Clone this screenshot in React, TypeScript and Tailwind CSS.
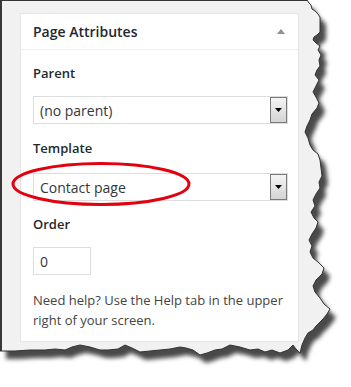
const TORN: [number, number][] = [
  [307, 0], [309, 3], [311, 5], [312, 9], [315, 11], [318, 14], [320, 17], [320, 32], [317, 35], [314, 37],
  [313, 40], [316, 43], [320, 46], [318, 50], [321, 55], [319, 60], [320, 66], [317, 70], [315, 75], [319, 80],
  [316, 86], [313, 92], [316, 97], [319, 103], [317, 108], [312, 114], [310, 120], [307, 126], [305, 132],
  [308, 138], [310, 145], [313, 150], [318, 154], [320, 160], [321, 168], [322, 176], [319, 182], [320, 188],
  [316, 194], [313, 200], [315, 206], [311, 212], [314, 218], [318, 222], [316, 228], [312, 234], [309, 240],
  [312, 246], [310, 252], [313, 258], [318, 262], [324, 268], [322, 274], [316, 280], [313, 286], [315, 292],
  [320, 298], [324, 304], [330, 309], [327, 314], [323, 319], [320, 322], [316, 326], [313, 330], [308, 333],
  [305, 338], [302, 345], [300, 353], [296, 349], [293, 345], [288, 350], [280, 353], [272, 350], [265, 352],
  [258, 349], [250, 350], [240, 347], [230, 345], [222, 349], [215, 350], [207, 353], [200, 355], [193, 350],
  [186, 348], [180, 347], [170, 349], [160, 350], [150, 351], [140, 352], [132, 348], [125, 345], [118, 349],
  [108, 350], [100, 350], [90, 347], [80, 345], [72, 347], [65, 350], [55, 349], [45, 350], [30, 350],
  [15, 351], [0, 351],
];

const tornD = 'M' + TORN.map(([x, y]) => `${x} ${y}`).join(' L') + ' L0 0 Z';

function SelectBox({ value }: { value: string }) {
  return (
    <div className="flex h-[28px] w-[255px] items-stretch border border-[#dddddd] bg-white">
      <div className="flex flex-1 items-center pl-[6px] text-[14px] text-[#32373c]">{value}</div>
      <div className="flex w-[17px] items-center justify-center border border-[#7a7a7a] bg-gradient-to-b from-[#f4f4f4] to-[#d4d4d4]">
        <svg width="7" height="4" viewBox="0 0 7 4">
          <path d="M0 0 L7 0 L3.5 4 Z" fill="#000" />
        </svg>
      </div>
    </div>
  );
}

export default function App() {
  return (
    <div className="relative h-[387px] w-[351px] overflow-hidden bg-white" style={{ fontFamily: '"Open Sans", sans-serif' }}>
      <div className="h-full border-l-2 border-t border-[#3a3a3a] bg-[#f1f1f1] pl-[18px] pt-[12px]">
        <div className="w-[279px] border border-[#e5e5e5] bg-white">
          <div className="flex h-[36px] items-center justify-between border-b border-[#eeeeee] pl-[12px] pr-[13px]">
            <h2 className="text-[14px] font-semibold text-[#23282d]">Page Attributes</h2>
            <svg width="8" height="5" viewBox="0 0 8 5">
              <path d="M0 5 L4 0 L8 5 Z" fill="#8a9199" />
            </svg>
          </div>
          <div className="flex flex-col px-[12px] pb-[11px] pt-[14px] text-[13px] text-[#444]">
            <div className="h-[18px] font-semibold leading-[18px] text-[#23282d]">Parent</div>
            <div className="mt-[14px]"><SelectBox value="(no parent)" /></div>
            <div className="mt-[15px] h-[18px] font-semibold leading-[18px] text-[#23282d]">Template</div>
            <div className="mt-[16px]"><SelectBox value="Contact page" /></div>
            <div className="mt-[14px] h-[18px] font-semibold leading-[18px] text-[#23282d]">Order</div>
            <div className="mt-[14px] flex h-[28px] w-[58px] items-center border border-[#dddddd] pl-[6px] text-[14px] text-[#32373c]">0</div>
            <p className="mt-[15px] leading-[20px] text-[#444]">Need help? Use the Help tab in the upper right of your screen.</p>
          </div>
        </div>
      </div>
      <svg className="pointer-events-none absolute inset-0" width="351" height="387" viewBox="0 0 351 387">
        <defs>
          <filter id="blur" x="-10%" y="-10%" width="120%" height="120%">
            <feGaussianBlur stdDeviation="2" />
          </filter>
          <mask id="outside">
            <path d={`M0 0 H351 V387 H0 Z ${tornD}`} fill="#fff" fillRule="evenodd" />
          </mask>
        </defs>
        <path d={`M0 0 H351 V387 H0 Z ${tornD}`} fill="#fff" fillRule="evenodd" />
        <g mask="url(#outside)">
          <path d={tornD} transform="translate(6 8)" fill="#4a4a4a" filter="url(#blur)" />
        </g>
        <path d={tornD} fill="none" stroke="#333" strokeWidth="1" />
        <ellipse cx="101" cy="184" rx="88" ry="20.5" fill="none" stroke="#e3000f" strokeWidth="3" />
      </svg>
    </div>
  );
}
